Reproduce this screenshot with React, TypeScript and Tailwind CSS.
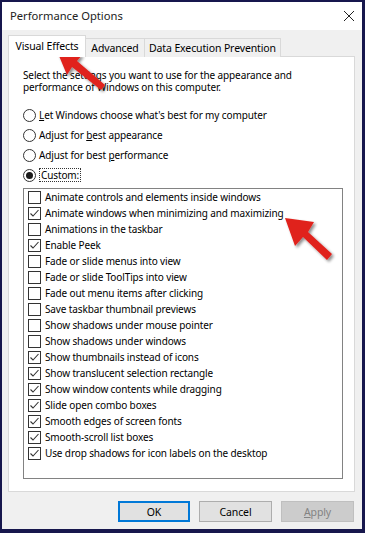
import React from "react";

const items: [string, boolean][] = [
  ["Animate controls and elements inside windows", false],
  ["Animate windows when minimizing and maximizing", true],
  ["Animations in the taskbar", false],
  ["Enable Peek", true],
  ["Fade or slide menus into view", false],
  ["Fade or slide ToolTips into view", false],
  ["Fade out menu items after clicking", false],
  ["Save taskbar thumbnail previews", false],
  ["Show shadows under mouse pointer", false],
  ["Show shadows under windows", false],
  ["Show thumbnails instead of icons", true],
  ["Show translucent selection rectangle", true],
  ["Show window contents while dragging", true],
  ["Slide open combo boxes", true],
  ["Smooth edges of screen fonts", true],
  ["Smooth-scroll list boxes", true],
  ["Use drop shadows for icon labels on the desktop", true],
];

function Radio({ checked }: { checked?: boolean }) {
  return (
    <span className="w-[13px] h-[13px] rounded-full border border-[#333] bg-white flex items-center justify-center shrink-0">
      {checked && <span className="w-[7px] h-[7px] rounded-full bg-[#1a1a1a]" />}
    </span>
  );
}

function Check({ checked }: { checked: boolean }) {
  return (
    <span className="w-[13px] h-[13px] border border-[#333] bg-white shrink-0 flex items-center justify-center">
      {checked && (
        <svg width="11" height="11" viewBox="0 0 11 11">
          <path d="M1.5 5.5 L4 8 L9.5 2" fill="none" stroke="#333" strokeWidth="1.1" />
        </svg>
      )}
    </span>
  );
}

export default function App() {
  return (
    <div
      className="relative w-[365px] h-[533px] flex flex-col border-t-2 border-l-2 border-r-[3px] border-b-4 border-[#17174d] text-[10px] leading-[12px] tracking-[-0.12px] text-[#000] overflow-hidden"
      style={{ fontFamily: '"Noto Sans", "Segoe UI", sans-serif' }}
    >
      <div className="h-[28px] bg-white flex items-center justify-between pl-[8px] pr-[6px] shrink-0">
        <span className="text-[11.2px] tracking-[0px] text-[#222]">Performance Options</span>
        <svg width="12" height="12" viewBox="0 0 12 12" className="mr-[1px]">
          <path d="M1 1 L11 11 M11 1 L1 11" stroke="#222" strokeWidth="1" />
        </svg>
      </div>
      <div className="flex-1 bg-[#f0f0f0] flex flex-col pl-[6px] pr-[7px] pt-[5px]">
        <div className="flex items-end h-[22px] relative z-10">
          <div className="h-[22px] w-[78px] bg-white border border-b-0 border-[#d9d9d9] flex items-center justify-center pb-[2px] text-[10.5px]">
            Visual Effects
          </div>
          <div className="h-[19px] w-[59px] bg-[#f0f0f0] border border-l-0 border-[#d9d9d9] border-b-0 flex items-center justify-center text-[10.5px]">
            Advanced
          </div>
          <div className="h-[19px] w-[136px] bg-[#f0f0f0] border border-l-0 border-[#d9d9d9] border-b-0 flex items-center justify-center text-[10.5px]">
            Data Execution Prevention
          </div>
        </div>
        <div className="h-[436px] bg-white border border-[#d9d9d9] -mt-[1px] pl-[14px] pr-[8px] pt-[12px] flex flex-col">
          <p className="whitespace-nowrap">
            Select the settings you want to use for the appearance and
            <br />
            performance of Windows on this computer.
          </p>
          <div className="flex flex-col mt-[12px]">
            <div className="h-[20px] flex items-center gap-[3px]">
              <Radio />
              <span>
                <span className="underline">L</span>et Windows choose what's best for my computer
              </span>
            </div>
            <div className="h-[20px] flex items-center gap-[3px]">
              <Radio />
              <span>
                Adjust for <span className="underline">b</span>est appearance
              </span>
            </div>
            <div className="h-[20px] flex items-center gap-[3px]">
              <Radio />
              <span>
                Adjust for best <span className="underline">p</span>erformance
              </span>
            </div>
            <div className="h-[20px] flex items-center gap-[3px]">
              <Radio checked />
              <span className="border border-dotted border-[#333] px-[1px] leading-[12px]">
                Custom:
              </span>
            </div>
          </div>
          <div className="mt-[3px] w-[320px] h-[291px] border border-[#828282] pl-[4px] flex flex-col">
            {items.map(([label, c]) => (
              <div key={label} className="h-[16px] flex items-center gap-[4px]">
                <Check checked={c} />
                <span className="whitespace-nowrap">{label}</span>
              </div>
            ))}
          </div>
        </div>
        <div className="flex justify-end gap-[9px] mt-[9px] pr-[1px] text-[10.5px]">
          <button className="w-[72px] h-[21px] bg-[#e1e1e1] border-2 border-[#0078d7] flex items-center justify-center">
            OK
          </button>
          <button className="w-[73px] h-[21px] bg-[#e1e1e1] border border-[#adadad] flex items-center justify-center">
            Cancel
          </button>
          <button className="w-[73px] h-[21px] bg-[#cccccc] border border-[#bfbfbf] text-[#838383] flex items-center justify-center">
            <span>
              <span className="underline">A</span>pply
            </span>
          </button>
        </div>
      </div>
      <svg
        className="absolute pointer-events-none"
        style={{ left: -2, top: -2 }}
        width="365"
        height="533"
        viewBox="0 0 365 533"
      >
        <defs>
          <filter id="sh" x="-20%" y="-20%" width="150%" height="150%">
            <feGaussianBlur in="SourceAlpha" stdDeviation="1.5" />
            <feOffset dx="2" dy="2" result="b" />
            <feComponentTransfer>
              <feFuncA type="linear" slope="0.45" />
            </feComponentTransfer>
            <feMerge>
              <feMergeNode />
              <feMergeNode in="SourceGraphic" />
            </feMerge>
          </filter>
        </defs>
        <polygon
          filter="url(#sh)"
          fill="#e0221c"
          points="57,51 82,55 77,61 105,85 101,90 72,67 67,75"
        />
        <polygon
          filter="url(#sh)"
          fill="#e0221c"
          points="285,218 314,222 308,232 332,254 327,260 303,237 295,246"
        />
      </svg>
    </div>
  );
}
